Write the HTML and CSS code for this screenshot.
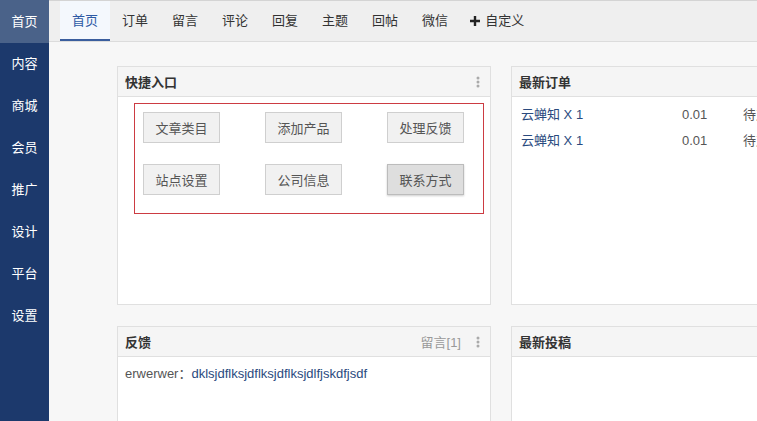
FILE: index.html
```html
<!DOCTYPE html>
<html lang="zh-CN">
<head>
    <meta charset="UTF-8">
    <title>后台首页</title>
    <link rel="stylesheet" href="styles.css">
</head>
<body>
    <div class="sidebar">
        <a class="side-item active">首页</a>
        <a class="side-item">内容</a>
        <a class="side-item">商城</a>
        <a class="side-item">会员</a>
        <a class="side-item">推广</a>
        <a class="side-item">设计</a>
        <a class="side-item">平台</a>
        <a class="side-item">设置</a>
    </div>
    <div class="main">
        <div class="topbar">
            <a class="tab active">首页</a>
            <a class="tab">订单</a>
            <a class="tab">留言</a>
            <a class="tab">评论</a>
            <a class="tab">回复</a>
            <a class="tab">主题</a>
            <a class="tab">回帖</a>
            <a class="tab">微信</a>
            <a class="tab add">
                <svg width="10" height="10" viewBox="0 0 10 10"><path d="M3.8 0h2.4v3.8H10v2.4H6.2V10H3.8V6.2H0V3.8h3.8z" fill="#222"/></svg>
                自定义
            </a>
        </div>
        <div class="content">
            <!-- 快捷入口 -->
            <div class="panel">
                <div class="panel-head">
                    <span class="panel-title">快捷入口</span>
                    <span class="dots"><svg width="4" height="12" viewBox="0 0 4 12"><circle cx="2" cy="2" r="1.5" fill="#aaa"/><circle cx="2" cy="6" r="1.5" fill="#aaa"/><circle cx="2" cy="10" r="1.5" fill="#aaa"/></svg></span>
                </div>
                <div class="quick">
                    <button class="qbtn">文章类目</button>
                    <button class="qbtn">添加产品</button>
                    <button class="qbtn">处理反馈</button>
                    <button class="qbtn">站点设置</button>
                    <button class="qbtn">公司信息</button>
                    <button class="qbtn hover">联系方式</button>
                </div>
            </div>
            <!-- 最新订单 -->
            <div class="panel">
                <div class="panel-head">
                    <span class="panel-title">最新订单</span>
                </div>
                <div class="orders">
                    <div class="order-row">
                        <a class="order-name">云蝉知 X 1</a>
                        <span class="order-price">0.01</span>
                        <span class="order-state">待支付</span>
                    </div>
                    <div class="order-row">
                        <a class="order-name">云蝉知 X 1</a>
                        <span class="order-price">0.01</span>
                        <span class="order-state">待支付</span>
                    </div>
                </div>
            </div>
            <!-- 反馈 -->
            <div class="panel">
                <div class="panel-head">
                    <span class="panel-title">反馈</span>
                    <span class="panel-extra">留言[1]</span>
                    <span class="dots"><svg width="4" height="12" viewBox="0 0 4 12"><circle cx="2" cy="2" r="1.5" fill="#aaa"/><circle cx="2" cy="6" r="1.5" fill="#aaa"/><circle cx="2" cy="10" r="1.5" fill="#aaa"/></svg></span>
                </div>
                <div class="feedback">
                    <span class="fb-user">erwerwer：</span><a class="fb-text">dklsjdflksjdflksjdflksjdlfjskdfjsdf</a>
                </div>
            </div>
            <!-- 最新投稿 -->
            <div class="panel">
                <div class="panel-head">
                    <span class="panel-title">最新投稿</span>
                </div>
            </div>
        </div>
    </div>
</body>
</html>
```
FILE: styles.css
```css
body {
    margin: 0;
    padding: 0;
    font-family: "Liberation Sans", "Noto Sans CJK SC", sans-serif;
    font-size: 13px;
    color: #333;
    background-color: #f7f7f7;
    display: flex;
    height: 421px;
    overflow: hidden;
}
.sidebar {
    width: 49px;
    flex-shrink: 0;
    background-color: #1c396c;
    display: flex;
    flex-direction: column;
}
.side-item {
    height: 42px;
    line-height: 42px;
    text-align: center;
    color: #fff;
    font-size: 13px;
}
.side-item.active {
    height: 43px;
    line-height: 44px;
    background-color: #4a6289;
}
.main {
    flex: 1;
    min-width: 0;
    display: flex;
    flex-direction: column;
}
.topbar {
    height: 40px;
    border-top: 1px solid #d4d4d4;
    border-bottom: 1px solid #dcdcdc;
    background-color: #efefef;
    display: flex;
    padding-left: 11px;
}
.tab {
    padding: 0 12px;
    line-height: 40px;
    color: #333;
    display: flex;
    align-items: center;
    gap: 5px;
}
.tab.active {
    background-color: #f4f8fd;
    color: #2d5aa5;
    box-shadow: inset 0 -2px 0 #3a5e9e;
}
.tab.add {
    padding-left: 10px;
}
.content {
    padding: 24px 0 0 68px;
    display: grid;
    grid-template-columns: 374px 374px;
    grid-template-rows: 239px 239px;
    column-gap: 20px;
    row-gap: 21px;
    overflow: hidden;
}
.panel {
    background-color: #fff;
    border: 1px solid #e0e0e0;
}
.panel-head {
    height: 29px;
    background-color: #f5f5f5;
    border-bottom: 1px solid #e0e0e0;
    display: flex;
    align-items: center;
    padding: 0 10px 0 7px;
}
.panel-title {
    flex: 1;
    font-weight: bold;
    color: #333;
}
.panel-extra {
    color: #999;
    margin-right: 15px;
}
.dots {
    display: flex;
    align-items: center;
}
.quick {
    margin: 6px 6px 0 16px;
    border: 1px solid #cc3b42;
    padding: 8px 9px 18px 8px;
    display: grid;
    grid-template-columns: 77px 77px 77px;
    column-gap: 45px;
    row-gap: 21px;
}
.qbtn {
    height: 31px;
    border: 1px solid #cfcfcf;
    background-color: #f1f1f1;
    color: #555;
    font-family: "Liberation Sans", "Noto Sans CJK SC", sans-serif;
    font-size: 13px;
    padding: 0;
}
.qbtn.hover {
    background-color: #dedede;
    border-color: #bcbcbc;
    box-shadow: 0 1px 2px rgba(0,0,0,0.2);
}
.orders {
    padding: 5px 0 0 9px;
}
.order-row {
    height: 26px;
    line-height: 26px;
    display: flex;
    white-space: nowrap;
}
.order-name {
    width: 161px;
    color: #2a4a7e;
}
.order-price {
    width: 61px;
    color: #555;
}
.order-state {
    color: #555;
}
.feedback {
    padding: 6px 7px;
}
.fb-user {
    color: #555;
}
.fb-text {
    color: #2a4a7e;
}
```
